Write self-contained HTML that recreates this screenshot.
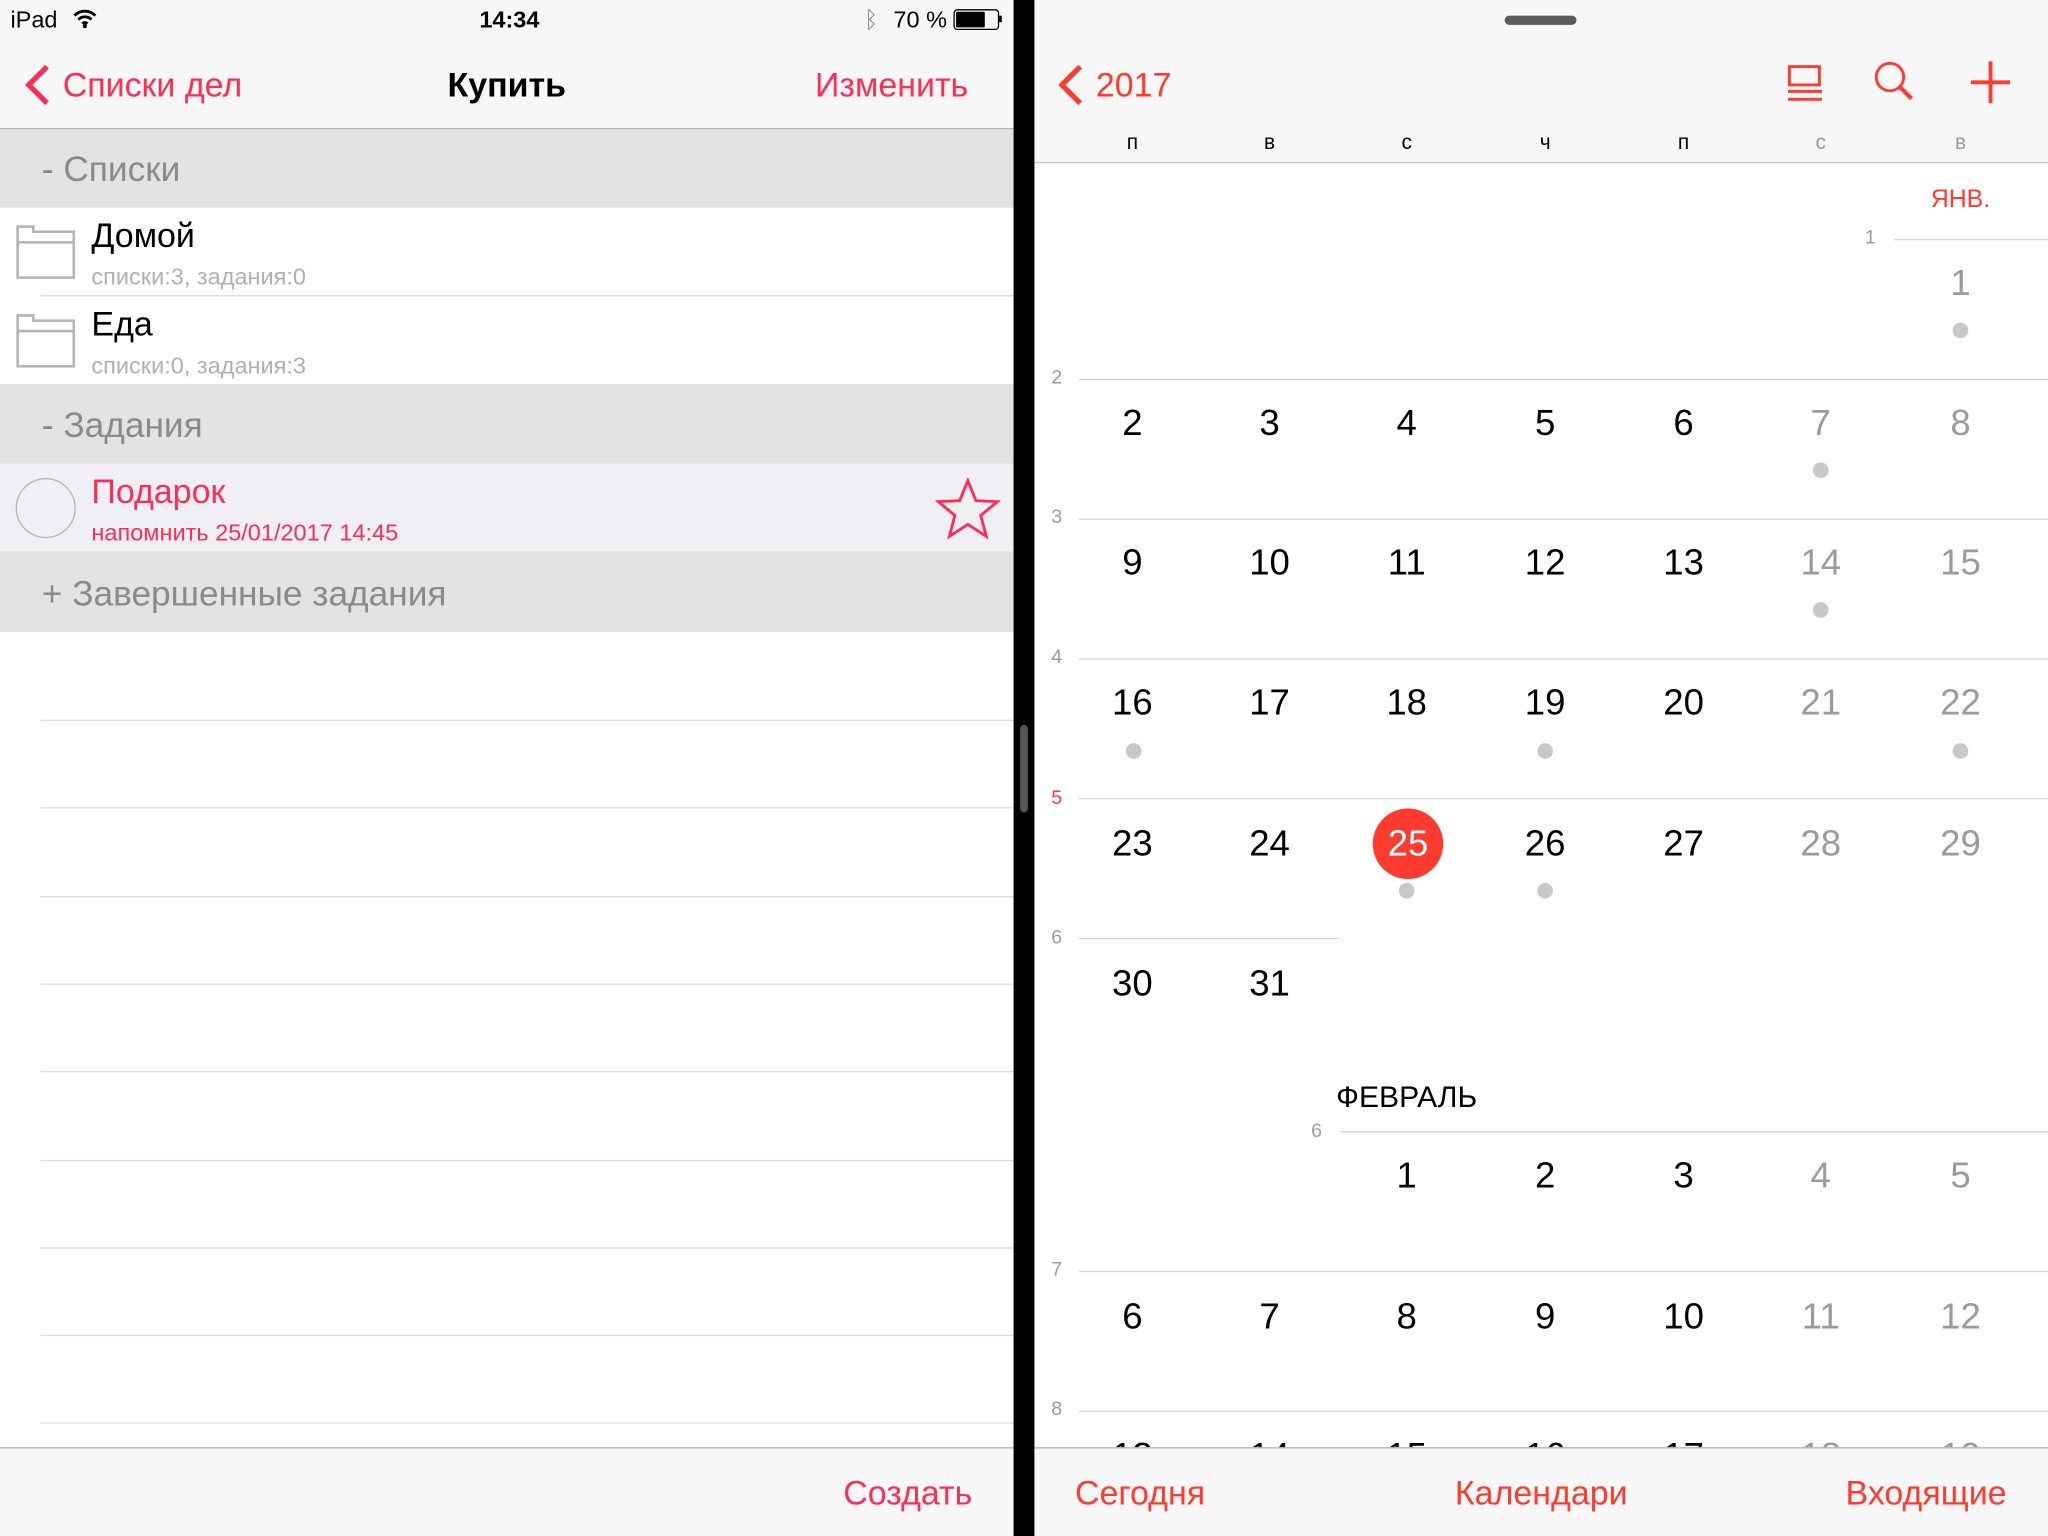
<!DOCTYPE html>
<html><head><meta charset="utf-8"><style>
html,body{margin:0;padding:0;width:2048px;height:1536px;overflow:hidden;background:#fff}
#w{position:absolute;left:0;top:0;width:1568px;height:1176px;transform:scale(1.306122);transform-origin:0 0;font-family:"Liberation Sans","DejaVu Sans",sans-serif;overflow:hidden;background:#fff}
.a{position:absolute}
.c{position:absolute;transform:translate(-50%,-50%);white-space:nowrap;line-height:1}
.l{position:absolute;transform:translateY(-50%);white-space:nowrap;line-height:1}
.hl{position:absolute;height:1px;background:#d4d4d4}
.red{color:#ff2d55}
.cr{color:#ff3b30}
.n{font-size:28px;color:#000}
.g{color:#9b9b9b}
.dot{position:absolute;width:12px;height:12px;border-radius:6px;background:#c8c8c8;transform:translate(-50%,-50%)}
.wk{font-size:15px;color:#9b9b9b}
</style></head><body><div id="w">
<!-- LEFT -->
<div class="a" style="left:0;top:0;width:776px;height:98px;background:#f7f7f7;border-bottom:1px solid #b2b2b2"></div>
<div class="l" style="left:8px;top:15px;font-size:18px">iPad</div>
<svg class="a" style="left:55px;top:6px" width="20" height="16" viewBox="0 0 20 16"><path d="M2 6a11 11 0 0 1 16 0M5 9a7 7 0 0 1 10 0M8 12a3 3 0 0 1 4 0" stroke="#000" stroke-width="2.2" fill="none"/><circle cx="10" cy="14" r="1.6"/></svg>
<div class="c" style="left:390px;top:15px;font-size:18px;font-weight:bold">14:34</div>
<div class="c" style="left:667px;top:15px;font-size:18px;color:#888">ᛒ</div>
<div class="l" style="left:684px;top:15px;font-size:18px">70 %</div>
<div class="a" style="left:730px;top:7px;width:33px;height:14px;border:1px solid #000;border-radius:3px"></div>
<div class="a" style="left:732px;top:9px;width:22px;height:12px;background:#000;border-radius:1px"></div>
<div class="a" style="left:765px;top:12px;width:2px;height:5px;background:#000"></div>
<svg class="a" style="left:18px;top:49px" width="22" height="32" viewBox="0 0 22 32"><path d="M18 2 4 16l14 14" stroke="#ff2d55" stroke-width="4" fill="none"/></svg>
<div class="l red" style="left:48px;top:65px;font-size:26px">Списки дел</div>
<div class="c" style="left:388px;top:65px;font-size:26px;font-weight:bold">Купить</div>
<div class="l red" style="left:624px;top:65px;font-size:26px">Изменить</div>

<div class="a" style="left:0;top:99px;width:776px;height:60px;background:#e3e3e3"></div>
<div class="l" style="left:32px;top:130px;font-size:27px;color:#8a8a8a">- Списки</div>
<svg class="a" style="left:12px;top:171px" width="47" height="44" viewBox="0 0 47 44"><path d="M1.5 2.5h12v4h31v35h-43z M1.5 14.5h43" stroke="#b5b5b5" stroke-width="2" fill="none"/></svg>
<div class="l" style="left:70px;top:180px;font-size:26px">Домой</div>
<div class="l" style="left:70px;top:212px;font-size:18px;color:#b0b0b0">списки:3, задания:0</div>
<div class="hl" style="left:31px;top:226px;width:745px"></div>
<svg class="a" style="left:12px;top:239px" width="47" height="44" viewBox="0 0 47 44"><path d="M1.5 2.5h12v4h31v35h-43z M1.5 14.5h43" stroke="#b5b5b5" stroke-width="2" fill="none"/></svg>
<div class="l" style="left:70px;top:248px;font-size:26px">Еда</div>
<div class="l" style="left:70px;top:280px;font-size:18px;color:#b0b0b0">списки:0, задания:3</div>

<div class="a" style="left:0;top:294px;width:776px;height:61px;background:#e3e3e3"></div>
<div class="l" style="left:32px;top:326px;font-size:27px;color:#8a8a8a">- Задания</div>
<div class="a" style="left:0;top:355px;width:776px;height:67px;background:#efeff4"></div>
<div class="a" style="left:12px;top:366px;width:44px;height:44px;border:1.5px solid #b5b5b5;border-radius:50%"></div>
<div class="l red" style="left:70px;top:376px;font-size:26px">Подарок</div>
<div class="l red" style="left:70px;top:408px;font-size:18px">напомнить 25/01/2017 14:45</div>
<svg class="a" style="left:716px;top:366px" width="50" height="48" viewBox="0 0 50 48"><path d="M25 2l6.2 15.3 16.4.8-12.7 10.5 4.2 16L25 35.5 10.9 44.6l4.2-16L2.4 18.1l16.4-.8z" stroke="#ff2d55" stroke-width="2.2" fill="none" stroke-linejoin="miter"/></svg>
<div class="a" style="left:0;top:422px;width:776px;height:62px;background:#e3e3e3"></div>
<div class="l" style="left:32px;top:455px;font-size:27px;color:#8a8a8a">+ Завершенные задания</div>

<div class="hl" style="left:31px;top:551px;width:745px;background:#dcdcdc"></div>
<div class="hl" style="left:31px;top:618px;width:745px;background:#dcdcdc"></div>
<div class="hl" style="left:31px;top:686px;width:745px;background:#dcdcdc"></div>
<div class="hl" style="left:31px;top:753px;width:745px;background:#dcdcdc"></div>
<div class="hl" style="left:31px;top:820px;width:745px;background:#dcdcdc"></div>
<div class="hl" style="left:31px;top:888px;width:745px;background:#dcdcdc"></div>
<div class="hl" style="left:31px;top:955px;width:745px;background:#dcdcdc"></div>
<div class="hl" style="left:31px;top:1022px;width:745px;background:#dcdcdc"></div>
<div class="hl" style="left:31px;top:1089px;width:745px;background:#dcdcdc"></div>
<div class="a" style="left:0;top:1108px;width:776px;height:68px;background:#f7f7f7;border-top:1px solid #b2b2b2"></div>
<div class="c red" style="left:695px;top:1143px;font-size:26px">Создать</div>

<!-- divider -->
<div class="a" style="left:776px;top:0;width:16px;height:1176px;background:#000"></div>
<div class="a" style="left:781px;top:555px;width:6px;height:67px;background:#555;border-radius:3px"></div>

<!-- RIGHT -->
<div class="a" style="left:792px;top:0;width:776px;height:124px;background:#f7f7f7;border-bottom:1px solid #c8c8c8"></div>
<div class="a" style="left:1152px;top:12px;width:55px;height:7px;background:#5a5a5a;border-radius:4px"></div>
<svg class="a" style="left:809px;top:49px" width="22" height="32" viewBox="0 0 22 32"><path d="M18 2 4 16l14 14" stroke="#ff3b30" stroke-width="4" fill="none"/></svg>
<div class="l cr" style="left:839px;top:65px;font-size:26px">2017</div>
<svg class="a" style="left:1367px;top:48px" width="30" height="32" viewBox="0 0 30 32"><rect x="3" y="3" width="23" height="14" stroke="#ff3b30" stroke-width="2.2" fill="none"/><path d="M2 22h26M2 28h26" stroke="#ff3b30" stroke-width="2.2"/></svg>
<svg class="a" style="left:1434px;top:46px" width="34" height="34" viewBox="0 0 34 34"><circle cx="13" cy="13" r="10.5" stroke="#ff3b30" stroke-width="2.2" fill="none"/><path d="M20.5 20.5l9 9" stroke="#ff3b30" stroke-width="3.2"/></svg>
<svg class="a" style="left:1508px;top:46px" width="32" height="34" viewBox="0 0 32 34"><path d="M16 1v32M1 17h30" stroke="#ff3b30" stroke-width="3"/></svg>
<div class="c" style="left:867px;top:110px;font-size:16px">п</div>
<div class="c" style="left:972px;top:110px;font-size:16px">в</div>
<div class="c" style="left:1077px;top:110px;font-size:16px">с</div>
<div class="c" style="left:1183px;top:110px;font-size:16px">ч</div>
<div class="c" style="left:1289px;top:110px;font-size:16px">п</div>
<div class="c g" style="left:1394px;top:110px;font-size:16px">с</div>
<div class="c g" style="left:1501px;top:110px;font-size:16px">в</div>

<div class="c cr" style="left:1501px;top:153px;font-size:19px">ЯНВ.</div>
<div class="c wk" style="left:1432px;top:182px">1</div>
<div class="hl" style="left:1450px;top:183px;width:118px"></div>
<div class="c n g" style="left:1501px;top:217px">1</div><div class="dot" style="left:1501px;top:253px"></div>

<div class="c wk" style="left:809px;top:289px">2</div><div class="hl" style="left:826px;top:290px;width:742px"></div>
<div class="c n" style="left:867px;top:324px">2</div><div class="c n" style="left:972px;top:324px">3</div><div class="c n" style="left:1077px;top:324px">4</div><div class="c n" style="left:1183px;top:324px">5</div><div class="c n" style="left:1289px;top:324px">6</div><div class="c n g" style="left:1394px;top:324px">7</div><div class="c n g" style="left:1501px;top:324px">8</div>
<div class="dot" style="left:1394px;top:360px"></div>

<div class="c wk" style="left:809px;top:396px">3</div><div class="hl" style="left:826px;top:397px;width:742px"></div>
<div class="c n" style="left:867px;top:431px">9</div><div class="c n" style="left:972px;top:431px">10</div><div class="c n" style="left:1077px;top:431px">11</div><div class="c n" style="left:1183px;top:431px">12</div><div class="c n" style="left:1289px;top:431px">13</div><div class="c n g" style="left:1394px;top:431px">14</div><div class="c n g" style="left:1501px;top:431px">15</div>
<div class="dot" style="left:1394px;top:467px"></div>

<div class="c wk" style="left:809px;top:503px">4</div><div class="hl" style="left:826px;top:504px;width:742px"></div>
<div class="c n" style="left:867px;top:538px">16</div><div class="c n" style="left:972px;top:538px">17</div><div class="c n" style="left:1077px;top:538px">18</div><div class="c n" style="left:1183px;top:538px">19</div><div class="c n" style="left:1289px;top:538px">20</div><div class="c n g" style="left:1394px;top:538px">21</div><div class="c n g" style="left:1501px;top:538px">22</div>
<div class="dot" style="left:868px;top:575px"></div><div class="dot" style="left:1183px;top:575px"></div><div class="dot" style="left:1501px;top:575px"></div>

<div class="c wk" style="left:809px;top:611px;color:#ff3b30">5</div><div class="hl" style="left:826px;top:611px;width:742px"></div>
<div class="a" style="left:1051px;top:619px;width:54px;height:54px;border-radius:50%;background:#ff3b30"></div>
<div class="c n" style="left:867px;top:646px">23</div><div class="c n" style="left:972px;top:646px">24</div><div class="c n" style="left:1078px;top:646px;color:#fff">25</div><div class="c n" style="left:1183px;top:646px">26</div><div class="c n" style="left:1289px;top:646px">27</div><div class="c n g" style="left:1394px;top:646px">28</div><div class="c n g" style="left:1501px;top:646px">29</div>
<div class="dot" style="left:1077px;top:682px"></div><div class="dot" style="left:1183px;top:682px"></div>

<div class="c wk" style="left:809px;top:718px">6</div><div class="hl" style="left:826px;top:718px;width:199px"></div>
<div class="c n" style="left:867px;top:753px">30</div><div class="c n" style="left:972px;top:753px">31</div>

<div class="c" style="left:1077px;top:840px;font-size:23px">ФЕВРАЛЬ</div>
<div class="c wk" style="left:1008px;top:866px">6</div><div class="hl" style="left:1026px;top:866px;width:542px"></div>
<div class="c n" style="left:1077px;top:900px">1</div><div class="c n" style="left:1183px;top:900px">2</div><div class="c n" style="left:1289px;top:900px">3</div><div class="c n g" style="left:1394px;top:900px">4</div><div class="c n g" style="left:1501px;top:900px">5</div>

<div class="c wk" style="left:809px;top:972px">7</div><div class="hl" style="left:826px;top:973px;width:742px"></div>
<div class="c n" style="left:867px;top:1008px">6</div><div class="c n" style="left:972px;top:1008px">7</div><div class="c n" style="left:1077px;top:1008px">8</div><div class="c n" style="left:1183px;top:1008px">9</div><div class="c n" style="left:1289px;top:1008px">10</div><div class="c n g" style="left:1394px;top:1008px">11</div><div class="c n g" style="left:1501px;top:1008px">12</div>

<div class="c wk" style="left:809px;top:1079px">8</div><div class="hl" style="left:826px;top:1080px;width:742px"></div>
<div class="c n" style="left:867px;top:1115px">13</div><div class="c n" style="left:972px;top:1115px">14</div><div class="c n" style="left:1077px;top:1115px">15</div><div class="c n" style="left:1183px;top:1115px">16</div><div class="c n" style="left:1289px;top:1115px">17</div><div class="c n g" style="left:1394px;top:1115px">18</div><div class="c n g" style="left:1501px;top:1115px">19</div>

<div class="a" style="left:792px;top:1108px;width:776px;height:68px;background:#f7f7f7;border-top:1px solid #b2b2b2"></div>
<div class="l cr" style="left:823px;top:1143px;font-size:26px">Сегодня</div>
<div class="c cr" style="left:1180px;top:1143px;font-size:26px">Календари</div>
<div class="l cr" style="left:1413px;top:1143px;font-size:26px">Входящие</div>
</div></body></html>
